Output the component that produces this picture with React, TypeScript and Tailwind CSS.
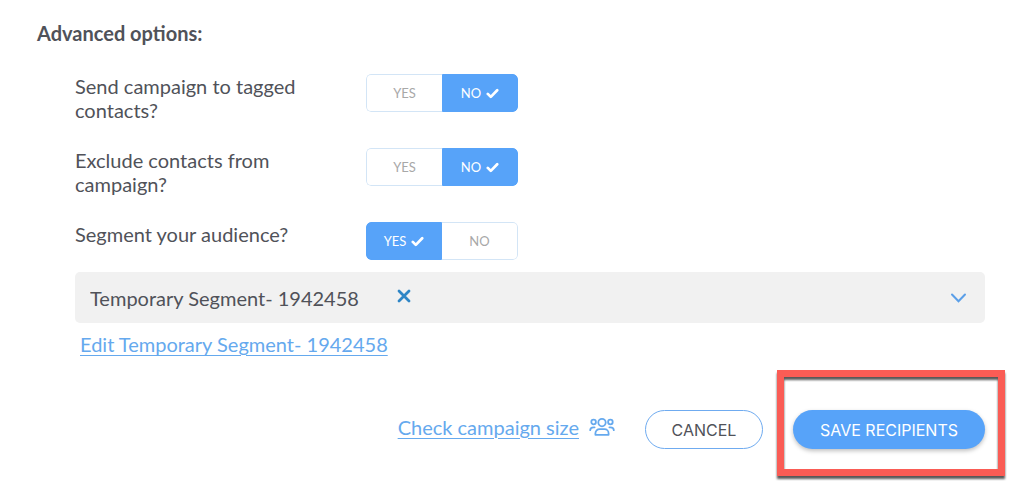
import { useState } from "react";

type Answer = "YES" | "NO";

function CheckIcon() {
  return (
    <svg
      width="13"
      height="11"
      viewBox="0 0 13 11"
      fill="none"
      stroke="currentColor"
      strokeWidth="2.7"
      strokeLinecap="round"
      strokeLinejoin="round"
      aria-hidden="true"
    >
      <path d="M1.8 5.9l3 3L11.2 2.2" />
    </svg>
  );
}

function Toggle({ id, initial }: { id: string; initial: Answer }) {
  const [value, setValue] = useState<Answer>(initial);
  const options: Answer[] = ["YES", "NO"];
  return (
    <div
      role="group"
      aria-labelledby={id}
      className="grid h-[38px] w-[152px] shrink-0 grid-cols-2 overflow-hidden rounded-[5px]"
    >
      {options.map((option) => {
        const active = option === value;
        return (
          <button
            key={option}
            type="button"
            aria-pressed={active}
            onClick={() => setValue(option)}
            className={
              "flex items-center justify-center gap-[5px] border text-[13px] leading-4 " +
              (option === "YES" ? "rounded-l-[5px] " : "rounded-r-[5px] ") +
              (active
                ? "border-[#57a3f9] bg-[#57a3f9] text-white"
                : "border-[#d3e5f6] bg-white text-[#a8a8a8] " +
                  (option === "YES" ? "border-r-0" : "border-l-0"))
            }
          >
            {option}
            {active && <CheckIcon />}
          </button>
        );
      })}
    </div>
  );
}

function OptionRow({ id, label, initial }: { id: string; label: string; initial: Answer }) {
  return (
    <div className="flex items-start">
      <p id={id} className="w-[291px] shrink-0 pr-10 text-xl leading-6">
        {label}
      </p>
      <Toggle id={id} initial={initial} />
    </div>
  );
}

function PeopleIcon() {
  return (
    <svg
      width="26"
      height="20"
      viewBox="0 0 26 20"
      fill="none"
      stroke="currentColor"
      strokeWidth="1.8"
      strokeLinecap="round"
      strokeLinejoin="round"
      aria-hidden="true"
    >
      <circle cx="13" cy="5.6" r="3.7" />
      <circle cx="4.6" cy="5" r="2.3" />
      <circle cx="21.4" cy="5" r="2.3" />
      <path d="M6.4 17.8v-1.4a4.2 4.2 0 0 1 4.2-4.2h4.8a4.2 4.2 0 0 1 4.2 4.2v1.4z" />
      <path d="M1.2 13.2c0-1.9 1.2-2.9 3.4-2.9h1M24.8 13.2c0-1.9-1.2-2.9-3.4-2.9h-1" />
    </svg>
  );
}

export default function App() {
  return (
    <main className="bg-white pt-[21px] pr-[39px] pb-11 pl-[37px] font-['Lato',sans-serif] text-[#505259]">
      <h2 className="text-xl leading-6 font-bold">Advanced options:</h2>

      <section className="mt-[29px] pl-[38px]">
        <div className="flex flex-col gap-[26px]">
          <OptionRow id="tagged" label="Send campaign to tagged contacts?" initial="NO" />
          <OptionRow id="exclude" label="Exclude contacts from campaign?" initial="NO" />
          <OptionRow id="segment" label="Segment your audience?" initial="YES" />
        </div>

        <div className="relative mt-3">
          <select
            aria-label="Segment"
            className="block h-[51px] w-full appearance-none rounded-[5px] bg-[#f1f1f1] pr-12 pl-[15px] text-xl text-[#505259]"
          >
            <option>Temporary Segment- 1942458</option>
          </select>
          <button
            type="button"
            aria-label="Clear segment"
            className="absolute top-4 left-[321px] flex size-4 items-center justify-center text-[#2f86c6]"
          >
            <svg width="14" height="14" viewBox="0 0 14 14" fill="none" stroke="currentColor" strokeWidth="2.8" strokeLinecap="round" aria-hidden="true">
              <path d="M2 2l10 10M12 2L2 12" />
            </svg>
          </button>
          <svg
            className="pointer-events-none absolute top-5 right-[18px] text-[#5b9fe8]"
            width="17"
            height="12"
            viewBox="0 0 17 12"
            fill="none"
            stroke="currentColor"
            strokeWidth="2"
            strokeLinecap="round"
            aria-hidden="true"
          >
            <path d="M2 2.5l6.5 6.8L15 2.5" />
          </svg>
        </div>

        <div className="mt-[9px] pl-[5px]">
          <a href="#edit" className="text-xl leading-6 text-[#65a9ee] underline decoration-1 underline-offset-3">
            Edit Temporary Segment- 1942458
          </a>
        </div>
      </section>

      <div className="mt-[52px] flex items-center justify-end">
        <a href="#size" className="mr-[30px] flex items-center gap-[10px] pb-1.5 text-xl leading-6 text-[#65a9ee]">
          <span className="underline decoration-1 underline-offset-3">Check campaign size</span>
          <PeopleIcon />
        </a>
        <button
          type="button"
          className="mr-[30px] h-[39px] w-[118px] rounded-full border border-[#6fabf0] font-['Inter',sans-serif] text-base text-[#505259]"
        >
          CANCEL
        </button>
        <div className="relative">
          <button
            type="button"
            className="block h-[39px] w-48 rounded-full bg-[#57a3f9] font-['Inter',sans-serif] text-base text-white shadow-[0_2px_4px_rgba(0,0,0,0.25)]"
          >
            SAVE RECIPIENTS
          </button>
          <div className="pointer-events-none absolute -top-10 -right-5 -bottom-[27px] -left-4 border-[7px] border-[#fa5c55] drop-shadow-[0_3px_1px_rgba(0,0,0,0.65)]" />
        </div>
      </div>
    </main>
  );
}
